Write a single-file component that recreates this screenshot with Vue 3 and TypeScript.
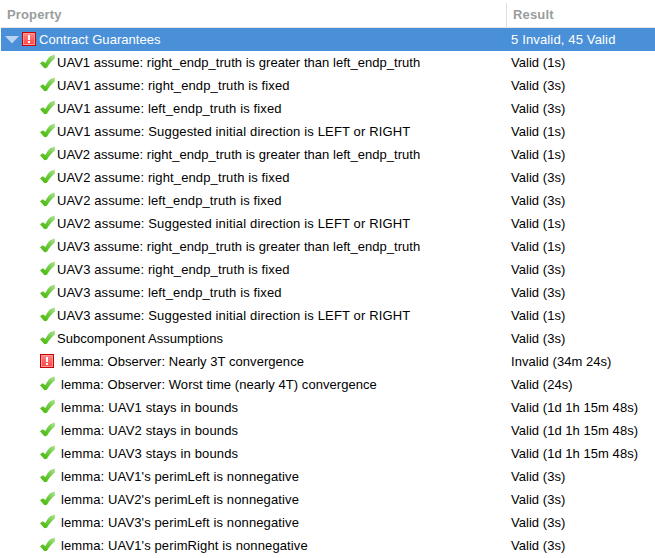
<script setup lang="ts">
interface Item {
  text: string
  result: string
  invalid?: boolean
  lemma?: boolean
  tracking?: 'tight' | 'snug' | 'wide'
}

const assumptions: Item[] = [1, 2, 3].flatMap((n): Item[] => [
  { text: `UAV${n} assume: right_endp_truth is greater than left_endp_truth`, result: 'Valid (1s)', tracking: 'tight' },
  { text: `UAV${n} assume: right_endp_truth is fixed`, result: 'Valid (3s)' },
  { text: `UAV${n} assume: left_endp_truth is fixed`, result: 'Valid (3s)' },
  { text: `UAV${n} assume: Suggested initial direction is LEFT or RIGHT`, result: 'Valid (1s)', tracking: 'wide' },
])

const items: Item[] = [
  ...assumptions,
  { text: 'Subcomponent Assumptions', result: 'Valid (3s)', tracking: 'snug' },
  { text: 'lemma: Observer: Nearly 3T convergence', result: 'Invalid (34m 24s)', invalid: true, lemma: true, tracking: 'snug' },
  { text: 'lemma: Observer: Worst time (nearly 4T) convergence', result: 'Valid (24s)', lemma: true, tracking: 'snug' },
  { text: 'lemma: UAV1 stays in bounds', result: 'Valid (1d 1h 15m 48s)', lemma: true, tracking: 'wide' },
  { text: 'lemma: UAV2 stays in bounds', result: 'Valid (1d 1h 15m 48s)', lemma: true, tracking: 'wide' },
  { text: 'lemma: UAV3 stays in bounds', result: 'Valid (1d 1h 15m 48s)', lemma: true, tracking: 'wide' },
  { text: "lemma: UAV1's perimLeft is nonnegative", result: 'Valid (3s)', lemma: true },
  { text: "lemma: UAV2's perimLeft is nonnegative", result: 'Valid (3s)', lemma: true },
  { text: "lemma: UAV3's perimLeft is nonnegative", result: 'Valid (3s)', lemma: true },
  { text: "lemma: UAV1's perimRight is nonnegative", result: 'Valid (3s)', lemma: true },
]
</script>

<template>
  <div class="tree">
    <svg width="0" height="0" class="defs">
      <defs>
        <linearGradient id="green" x1="1" y1="0" x2="0.3" y2="1">
          <stop offset="0" stop-color="#b4e59c" />
          <stop offset="0.45" stop-color="#74cf48" />
          <stop offset="1" stop-color="#4cba10" />
        </linearGradient>
        <linearGradient id="red" x1="0" y1="0" x2="0" y2="1">
          <stop offset="0" stop-color="#ff8080" />
          <stop offset="1" stop-color="#ff4a4a" />
        </linearGradient>
        <symbol id="check" viewBox="0 0 16 16">
          <path d="M0 9.3 L2.8 7.3 L5.4 9.1 C6.8 6 8.6 3.3 10.6 1.9 C11.8 1.3 13.4 1.1 14.8 0.5 L15 4.2 C12 6.6 9.2 10 6.9 13.8 L4.5 14.3 Z" fill="url(#green)" />
        </symbol>
        <symbol id="error" viewBox="0 0 14 14">
          <rect x="0.5" y="0.5" width="13" height="13" fill="#fb9c9c" stroke="#cc0000" />
          <rect x="2" y="2" width="10" height="10" fill="url(#red)" />
          <path d="M6 3h2v5h-2z M6 9h2v2h-2z" fill="#fff" />
        </symbol>
      </defs>
    </svg>
    <header class="head">
      <span class="head-property">Property</span>
      <span class="head-result">Result</span>
    </header>
    <div class="row selected">
      <div class="property">
        <svg class="arrow" width="14" height="8" viewBox="0 0 14 8"><path d="M0 0h14L7 7.5z" fill="#b9d4f1" /></svg>
        <svg class="error" width="14" height="14"><use href="#error" /></svg>
        <span class="group snug">Contract Guarantees</span>
      </div>
      <div class="result wide">5 Invalid, 45 Valid</div>
    </div>
    <div v-for="item in items" :key="item.text" class="row">
      <div class="property child">
        <svg v-if="item.invalid" class="error" width="14" height="14"><use href="#error" /></svg>
        <svg v-else class="check" width="16" height="16"><use href="#check" /></svg>
        <span class="label" :class="[item.tracking, { lemma: item.lemma }]">{{ item.text }}</span>
      </div>
      <div class="result">{{ item.result }}</div>
    </div>
  </div>
</template>

<style>
body {
  background: #fff;
  overflow: hidden;
}
</style>

<style scoped>
.tree {
  height: 558px;
  overflow: hidden;
  position: relative;
  font: 13px/23px "Liberation Sans", Arial, sans-serif;
  letter-spacing: 0.12px;
  color: #000;
  white-space: pre;
}
.defs {
  position: absolute;
}
.head {
  display: grid;
  grid-template-columns: 506px 1fr;
  height: 28px;
  box-sizing: border-box;
  padding-top: 3px;
  margin-left: 1px;
  border-bottom: 1px solid #e6e6e6;
  font-weight: bold;
  color: #999d9d;
  letter-spacing: 0.15px;
}
.head-property {
  padding-left: 6px;
  border-right: 1px solid #e0e0e0;
  box-sizing: border-box;
}
.head-result {
  padding-left: 6px;
}
.row {
  display: grid;
  grid-template-columns: 510px 1fr;
  height: 23px;
  margin-left: 1px;
}
.selected {
  background: #4a90d9;
  color: #fff;
}
.property {
  display: flex;
  align-items: center;
  padding-left: 4px;
}
.child {
  padding-left: 39px;
}
.result {
  letter-spacing: 0.04px;
}
.tight {
  letter-spacing: 0.035px;
}
.snug {
  letter-spacing: 0.05px;
}
.wide {
  letter-spacing: 0.15px;
}
.arrow {
  margin: 1px 3px 0 0;
}
.group {
  margin-left: 3px;
}
.error {
  margin-bottom: 1px;
}
.child .error {
  margin-right: 2px;
}
.check {
  margin-bottom: 1px;
}
.label {
  margin-left: 1px;
}
.lemma {
  margin-left: 5px;
}
</style>
